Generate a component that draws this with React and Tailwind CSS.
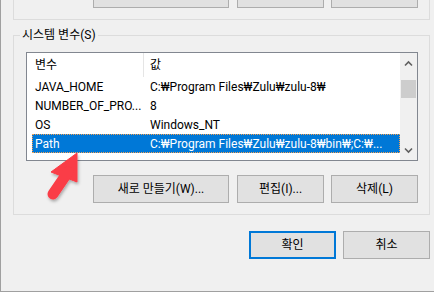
import React from 'react';

const rows = [
  { name: 'JAVA_HOME', value: 'C:₩Program Files₩Zulu₩zulu-8₩' },
  { name: 'NUMBER_OF_PRO...', value: '8' },
  { name: 'OS', value: 'Windows_NT' },
  { name: 'Path', value: 'C:₩Program Files₩Zulu₩zulu-8₩bin₩;C:₩...', selected: true },
];

function Btn({ children, className = '' }) {
  return (
    <button
      className={`flex items-center justify-center bg-[#e1e1e1] border border-[#adadad] text-[12px] text-black ${className}`}
    >
      {children}
    </button>
  );
}

function ListBox() {
  return (
    <div className="ml-[12px] mt-[16px] w-[392px] h-[109px] border border-[#828790] bg-white flex">
      <div className="flex-1 flex flex-col">
        {/* header */}
        <div className="h-[24px] flex items-center">
          <div className="w-[116px] pl-[8px] leading-[16px]">변수</div>
          <div className="w-px h-full bg-[#e5e5e5]" />
          <div className="pl-[6px] leading-[16px]">값</div>
        </div>
        <div className="pl-[5px]">
          {rows.map((r) => (
            <div
              key={r.name}
              className={`h-[19px] flex items-center whitespace-nowrap ${
                r.selected ? 'bg-[#0078d7] text-white outline outline-1 outline-dotted outline-offset-[-1px] outline-[#f5a050]' : 'text-black'
              }`}
            >
              <div className="w-[115px] pl-[3px]">{r.name}</div>
              <div className="pl-[3px]">{r.value}</div>
            </div>
          ))}
        </div>
      </div>
      {/* scrollbar */}
      <div className="w-[17px] bg-[#f0f0f0] flex flex-col items-center">
        <svg width="17" height="17" viewBox="0 0 17 17" className="mt-[2px]">
          <path d="M5 10.5 L8.5 7 L12 10.5" stroke="#606060" strokeWidth="1.6" fill="none" />
        </svg>
        <div className="mt-[8px] w-[15px] h-[18px] bg-[#cdcdcd]" />
        <div className="flex-1" />
        <svg width="17" height="17" viewBox="0 0 17 17" className="mb-[1px]">
          <path d="M5 6.5 L8.5 10 L12 6.5" stroke="#606060" strokeWidth="1.6" fill="none" />
        </svg>
      </div>
    </div>
  );
}

export default function App() {
  return (
    <div
      className="relative w-[434px] h-[292px] overflow-hidden bg-[#f0f0f0] border-l border-b border-[#a0a0a0] pl-[12px] text-[12px] text-black"
      style={{ fontFamily: "Roboto, 'Noto Sans CJK KR', sans-serif" }}
    >
      {/* top group (cut off) */}
      <div className="w-[417px] h-[20px] border-l border-r border-b border-[#dcdcdc] flex gap-[8px] pl-[79px]">
        <div className="w-[136px] h-[8px] bg-[#e1e1e1] border-l border-r border-b border-[#adadad]" />
        <div className="flex gap-[7px]">
          <div className="w-[87px] h-[8px] bg-[#e1e1e1] border-l border-r border-b border-[#adadad]" />
          <div className="w-[87px] h-[8px] bg-[#e1e1e1] border-l border-r border-b border-[#adadad]" />
        </div>
      </div>

      {/* system variables group */}
      <div className="relative mt-[15px] w-[417px] h-[180px] border border-[#dcdcdc]">
        <div className="absolute left-[6px] top-[-9px] px-[2px] bg-[#f0f0f0] leading-[16px]">시스템 변수(S)</div>
        <ListBox />
        <div className="mt-[14px] ml-[79px] flex gap-[8px]">
          <Btn className="w-[136px] h-[28px]">새로 만들기(W)...</Btn>
          <div className="flex gap-[7px]">
            <Btn className="w-[87px] h-[28px]">편집(I)...</Btn>
            <Btn className="w-[87px] h-[28px]">삭제(L)</Btn>
          </div>
        </div>
      </div>

      {/* dialog buttons */}
      <div className="mt-[16px] w-[417px] flex justify-end gap-[7px]">
        <Btn className="w-[87px] h-[28px] !border-2 !border-[#0078d7]">확인</Btn>
        <Btn className="w-[87px] h-[28px]">취소</Btn>
      </div>

      {/* red arrow annotation */}
      <svg className="absolute left-0 top-0 pointer-events-none" width="434" height="292" viewBox="0 0 434 292">
        <defs>
          <filter id="sh" x="-50%" y="-50%" width="200%" height="200%">
            <feDropShadow dx="1" dy="2" stdDeviation="1.5" floodColor="#000" floodOpacity="0.3" />
          </filter>
        </defs>
        <g filter="url(#sh)" fill="#fa3c46" stroke="#fa3c46">
          <polygon points="76,153 50,172 76,182" strokeWidth="1" strokeLinejoin="round" />
          <line x1="67" y1="172" x2="52" y2="194" strokeWidth="11" strokeLinecap="round" />
        </g>
      </svg>
    </div>
  );
}
